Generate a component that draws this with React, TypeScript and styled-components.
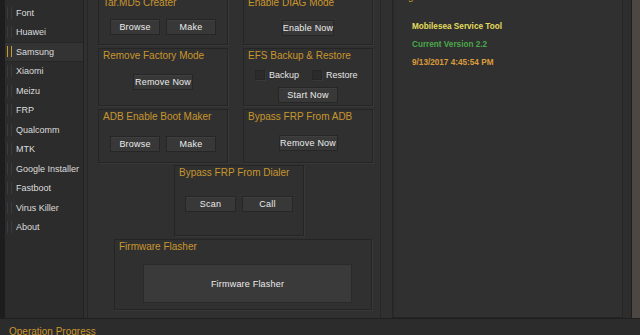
import React from 'react'
import styled, { createGlobalStyle } from 'styled-components'

const GlobalStyle = createGlobalStyle`
  html, body {
    margin: 0;
    padding: 0;
    background: #303030;
    overflow: hidden;
  }
  body {
    font-family: "Liberation Sans", Arial, sans-serif;
  }
`

const menu = [
  'Font',
  'Huawei',
  'Samsung',
  'Xiaomi',
  'Meizu',
  'FRP',
  'Qualcomm',
  'MTK',
  'Google Installer',
  'Fastboot',
  'Virus Killer',
  'About',
]

const App = () => {
  return (
    <Window>
      <GlobalStyle />
      <Workspace>
        <Edge />
        <Sidebar>
          {menu.map((item) => (
            <NavItem key={item} $active={item === 'Samsung'}>
              <Marker $active={item === 'Samsung'} />
              {item}
            </NavItem>
          ))}
        </Sidebar>

        <Main>
          <PanelGrid>
            <Panel>
              <Title>Tar.MD5 Creater</Title>
              <Body $pad={11}>
                <Button $w={50}>Browse</Button>
                <Button $w={50}>Make</Button>
              </Body>
            </Panel>
            <Panel>
              <Title>Enable DIAG Mode</Title>
              <Body $pad={12}>
                <Button $w={52}>Enable Now</Button>
              </Body>
            </Panel>
            <Panel>
              <Title>Remove Factory Mode</Title>
              <Body $pad={13}>
                <Button $w={60}>Remove Now</Button>
              </Body>
            </Panel>
            <Panel>
              <Title>EFS Backup &amp; Restore</Title>
              <CheckRow>
                <CheckItem $w={57}>
                  <Box />
                  Backup
                </CheckItem>
                <CheckItem $w={60}>
                  <Box />
                  Restore
                </CheckItem>
              </CheckRow>
              <Body $pad={7}>
                <Button $w={60}>Start Now</Button>
              </Body>
            </Panel>
            <Panel>
              <Title>ADB Enable Boot Maker</Title>
              <Body $pad={14}>
                <Button $w={50}>Browse</Button>
                <Button $w={50}>Make</Button>
              </Body>
            </Panel>
            <Panel>
              <Title>Bypass FRP From ADB</Title>
              <Body $pad={13}>
                <Button $w={59}>Remove Now</Button>
              </Body>
            </Panel>
          </PanelGrid>

          <DialerPanel>
            <Title>Bypass FRP From Dialer</Title>
            <Body $pad={18}>
              <Button $w={51}>Scan</Button>
              <Button $w={51}>Call</Button>
            </Body>
          </DialerPanel>

          <FlasherPanel>
            <Title>Firmware Flasher</Title>
            <FlashButton>Firmware Flasher</FlashButton>
          </FlasherPanel>
        </Main>

        <LogPanel>
          <Title>Log</Title>
          <LogLines>
            <LogLine $color="#e4dc5c">Mobilesea Service Tool</LogLine>
            <LogLine $color="#4aa84a">Current Version 2.2</LogLine>
            <LogLine $color="#dc9c3c">9/13/2017 4:45:54 PM</LogLine>
          </LogLines>
        </LogPanel>

        <Gutter />
        <Frame />
      </Workspace>

      <StatusBar>Operation Progress</StatusBar>
    </Window>
  )
}

export default App

const Window = styled.div`
  width: 640px;
  height: 335px;
  display: flex;
  flex-direction: column;
  background: #303030;
  overflow: hidden;
`

const Workspace = styled.div`
  display: flex;
  height: 319px;
  flex: none;
  border-bottom: 1px solid #1f1f1f;
  box-sizing: border-box;
`

const Edge = styled.div`
  width: 5px;
  flex: none;
  background: #1d1d1f;
`

const Sidebar = styled.div`
  width: 79px;
  flex: none;
  background: #2c2c2c;
  border-right: 1px solid #222;
  padding-top: 3px;
  box-sizing: border-box;
`

const NavItem = styled.div<{ $active?: boolean }>`
  height: 19.5px;
  display: flex;
  align-items: center;
  padding-left: 2px;
  font-size: 9px;
  color: #dcdcdc;
  white-space: nowrap;
  background: ${(p) => (p.$active ? '#333' : 'transparent')};
  box-shadow: ${(p) => (p.$active ? 'inset 0 1px 0 #262626, inset 0 -1px 0 #262626' : 'none')};
`

const Marker = styled.span<{ $active?: boolean }>`
  width: 5px;
  height: ${(p) => (p.$active ? 11 : 12)}px;
  box-sizing: border-box;
  border-left: 1px solid ${(p) => (p.$active ? '#c89a2e' : '#3a3a3a')};
  border-right: 1px solid ${(p) => (p.$active ? '#c89a2e' : '#3a3a3a')};
  margin-right: 4px;
  flex: none;
`

const Main = styled.div`
  width: 294px;
  flex: none;
  margin-left: 3px;
  border-left: 1px solid #262626;
  border-right: 1px solid #262626;
  padding-left: 10px;
  box-sizing: border-box;
  overflow: hidden;
`

const PanelGrid = styled.div`
  display: grid;
  grid-template-columns: 130px 130px;
  grid-template-rows: 50px 58px 54px;
  column-gap: 15px;
  row-gap: 3px;
  margin-top: -5px;
`

const Panel = styled.div`
  border: 1px solid #252525;
  box-shadow: 1px 1px 0 #383838;
  background: #303030;
  display: flex;
  flex-direction: column;
  box-sizing: border-box;
`

const DialerPanel = styled(Panel)`
  width: 130px;
  height: 71px;
  margin: 2px 0 0 76px;
`

const FlasherPanel = styled(Panel)`
  width: 258px;
  height: 71px;
  margin: 3px 0 0 16px;
`

const Title = styled.div`
  color: #c8962e;
  font-size: 10px;
  line-height: 10px;
  padding: 2px 0 0 4px;
  white-space: nowrap;
`

const Body = styled.div<{ $pad: number }>`
  display: flex;
  justify-content: center;
  gap: 6px;
  padding-top: ${(p) => p.$pad}px;
`

const Button = styled.div<{ $w: number }>`
  width: ${(p) => p.$w}px;
  height: 16px;
  box-sizing: border-box;
  display: flex;
  align-items: center;
  justify-content: center;
  background: #383838;
  border: 1px solid #262626;
  box-shadow: inset 0 1px 0 #3f3f3f;
  color: #ececec;
  font-size: 9px;
  letter-spacing: 0.2px;
  white-space: nowrap;
`

const CheckRow = styled.div`
  display: flex;
  padding: 9px 0 0 11px;
`

const CheckItem = styled.div<{ $w: number }>`
  width: ${(p) => p.$w}px;
  display: flex;
  align-items: center;
  gap: 4px;
  font-size: 9px;
  color: #e6e6e6;
`

const Box = styled.span`
  width: 10px;
  height: 10px;
  box-sizing: border-box;
  background: #2b2b2b;
  border: 1px solid #262626;
  box-shadow: 1px 1px 0 #393939;
  flex: none;
`

const FlashButton = styled.div`
  width: 209px;
  height: 39px;
  margin: 12px 0 0 28px;
  box-sizing: border-box;
  display: flex;
  align-items: center;
  justify-content: center;
  background: #3a3a3a;
  border: 1px solid #2a2a2a;
  color: #ececec;
  font-size: 9px;
  letter-spacing: 0.2px;
`

const LogPanel = styled.div`
  width: 231px;
  height: 329px;
  flex: none;
  margin: -11px 0 0 11px;
  border: 1px solid #252525;
  box-shadow: inset 1px 0 0 #2a2a2a;
  box-sizing: border-box;
`

const LogLines = styled.div`
  padding: 16px 0 0 19px;
  display: flex;
  flex-direction: column;
`

const LogLine = styled.div<{ $color: string }>`
  height: 18px;
  line-height: 18px;
  font-size: 8.2px;
  font-weight: 700;
  color: ${(p) => p.$color};
  white-space: nowrap;
`

const Gutter = styled.div`
  width: 8px;
  flex: none;
  background: #2d2d2d;
  border-right: 1px solid #1d1d1d;
`

const Frame = styled.div`
  flex: 1;
  background: #4c4742;
`

const StatusBar = styled.div`
  flex: 1;
  background: #2c2c2c;
  color: #c8962e;
  font-size: 10px;
  padding: 7px 0 0 9px;
  white-space: nowrap;
`
